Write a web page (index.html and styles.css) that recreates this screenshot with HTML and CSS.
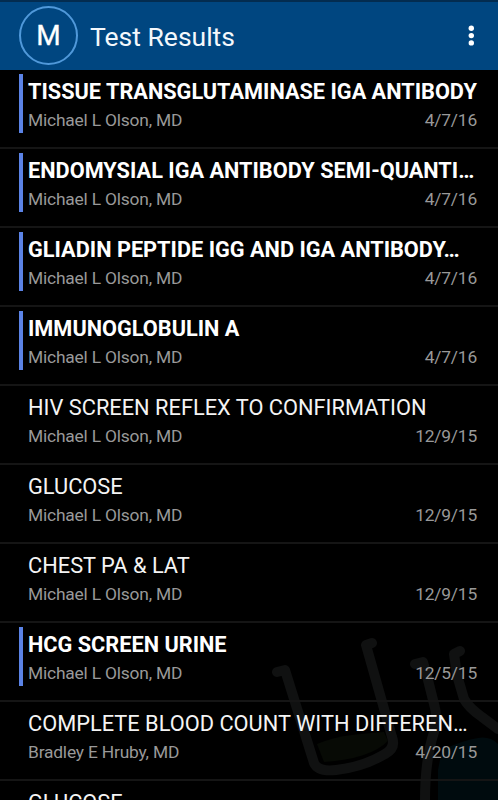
FILE: index.html
```html
<!DOCTYPE html>
<html lang="en">
<head>
<meta charset="utf-8">
<title>Test Results</title>
<link rel="stylesheet" href="styles.css">
</head>
<body>
<header class="bar">
  <div class="avatar">M</div>
  <h1 class="heading">Test Results</h1>
  <svg class="more" viewBox="0 0 8 24" width="8" height="24"><circle cx="4.3" cy="4.3" r="2.7"/><circle cx="4.3" cy="11.6" r="2.7"/><circle cx="4.3" cy="18.9" r="2.7"/></svg>
</header>
<main class="results">
  <svg class="backdrop" viewBox="0 0 240 180" width="240" height="180">
    <path class="liquid-green" d="M59 124Q76 117 94 115T126 112L130 121Q112 139 66 142Z"/>
    <path class="liquid-blue" d="M180 180V150L184 130Q206 120 220 118Q232 116 240 124V180Z"/>
    <g class="glass">
      <path d="M19 52L27 50L56 143Q60 152 78 150Q105 147 127 134Q138 128 134 117L108 25L114 23"/>
      <path d="M157 44L165 42L169 56L177 88Q179 95 176 112Q167 140 167 180"/>
      <path d="M202 31L196 34L199 55L206 79Q211 88 224 97L240 109"/>
    </g>
  </svg>
  <ul class="list">
    <li class="row unread"><div class="name">TISSUE TRANSGLUTAMINASE IGA ANTIBODY</div><div class="meta"><span>Michael L Olson, MD</span><span>4/7/16</span></div></li>
    <li class="row unread"><div class="name">ENDOMYSIAL IGA ANTIBODY SEMI-QUANTI…</div><div class="meta"><span>Michael L Olson, MD</span><span>4/7/16</span></div></li>
    <li class="row unread"><div class="name">GLIADIN PEPTIDE IGG AND IGA ANTIBODY…</div><div class="meta"><span>Michael L Olson, MD</span><span>4/7/16</span></div></li>
    <li class="row unread"><div class="name">IMMUNOGLOBULIN A</div><div class="meta"><span>Michael L Olson, MD</span><span>4/7/16</span></div></li>
    <li class="row"><div class="name">HIV SCREEN REFLEX TO CONFIRMATION</div><div class="meta"><span>Michael L Olson, MD</span><span>12/9/15</span></div></li>
    <li class="row"><div class="name">GLUCOSE</div><div class="meta"><span>Michael L Olson, MD</span><span>12/9/15</span></div></li>
    <li class="row"><div class="name">CHEST PA &amp; LAT</div><div class="meta"><span>Michael L Olson, MD</span><span>12/9/15</span></div></li>
    <li class="row unread"><div class="name">HCG SCREEN URINE</div><div class="meta"><span>Michael L Olson, MD</span><span>12/5/15</span></div></li>
    <li class="row"><div class="name">COMPLETE BLOOD COUNT WITH DIFFEREN…</div><div class="meta"><span>Bradley E Hruby, MD</span><span>4/20/15</span></div></li>
    <li class="row"><div class="name">GLUCOSE</div></li>
  </ul>
</main>
</body>
</html>
```

FILE: styles.css
```css
* { box-sizing: border-box; }
body {
  margin: 0;
  height: 800px;
  overflow: hidden;
  background: #000;
  color: #f4f4f4;
  font-family: Roboto, "Liberation Sans", sans-serif;
}
.bar {
  display: flex;
  align-items: center;
  height: 70px;
  padding: 2px 23px 0 19px;
  border-top: 2px solid #032c50;
  background: #004680;
}
.avatar {
  display: flex;
  align-items: center;
  justify-content: center;
  width: 59px;
  height: 59px;
  margin-top: -3px;
  border: 2px solid #5099da;
  border-radius: 50%;
  color: #fff;
  font-size: 28px;
  font-weight: 400;
  -webkit-text-stroke: 0.3px #fff;
}
.heading {
  margin: 0 auto 0 12px;
  font-size: 26.5px;
  font-weight: 400;
  line-height: 34px;
  color: #f4f8fc;
}
.more {
  margin-top: -2px;
  fill: #fff;
}
.results {
  position: relative;
  height: 730px;
  overflow: hidden;
}
.backdrop {
  position: absolute;
  right: 0;
  bottom: 0;
}
.glass {
  fill: none;
  stroke: #101111;
  stroke-width: 10;
  stroke-linecap: round;
  stroke-linejoin: round;
}
.liquid-green { fill: #070a05; }
.liquid-blue { fill: #000b0e; }
.list {
  position: relative;
  margin: 0;
  padding: 0;
  list-style: none;
}
.row {
  height: 79px;
  padding: 4px 21px 0 19px;
  border-bottom: 2px solid #151515;
}
.name, .meta {
  padding-left: 5px;
  border-left: 4px solid transparent;
  white-space: nowrap;
}
.name {
  height: 33px;
  font-size: 21.8px;
  line-height: 36px;
}
.meta {
  display: flex;
  justify-content: space-between;
  height: 26px;
  font-size: 17.4px;
  line-height: 27px;
  letter-spacing: -0.2px;
  color: #999;
}
.unread .name {
  color: #fff;
  font-size: 21.72px;
  font-weight: 700;
}
.unread .name, .unread .meta { border-left-color: #5b83e6; }
```
